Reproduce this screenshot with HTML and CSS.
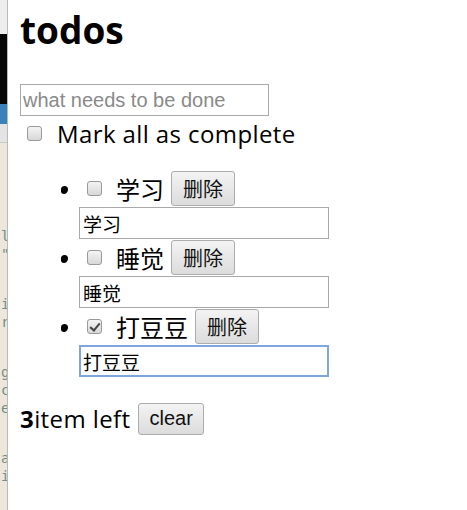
FILE: index.html
```html
<!DOCTYPE html>
<html lang="zh-CN">
<head>
  <meta charset="UTF-8">
  <title>todos</title>
  <link rel="stylesheet" href="styles.css">
</head>
<body>
  <!-- editor window behind the browser -->
  <div class="behind">
    <div class="behind-bar"></div>
    <div class="behind-dark"></div>
    <div class="behind-tab"></div>
    <div class="behind-gray"></div>
    <div class="behind-code">
      <span>l</span><span>"</span><span class="gap">i</span><span>r</span><span class="gap">g</span><span>c</span><span>e</span><span class="gap">a</span><span>i</span>
    </div>
  </div>

  <div class="app">
    <h1>todos</h1>
    <input class="new-todo" type="text" placeholder="what needs to be done">
    <label class="toggle-all">
      <input type="checkbox" class="check">
      <span>Mark all as complete</span>
    </label>

    <ul class="todo-list">
      <li>
        <div class="view">
          <input type="checkbox" class="check">
          <span class="title">学习</span>
          <button class="btn">删除</button>
        </div>
        <input class="edit" type="text" value="学习">
      </li>
      <li>
        <div class="view">
          <input type="checkbox" class="check">
          <span class="title">睡觉</span>
          <button class="btn">删除</button>
        </div>
        <input class="edit" type="text" value="睡觉">
      </li>
      <li>
        <div class="view">
          <input type="checkbox" class="check" checked>
          <span class="title">打豆豆</span>
          <button class="btn">删除</button>
        </div>
        <input class="edit focused" type="text" value="打豆豆">
      </li>
    </ul>

    <div class="footer">
      <span class="count"><strong>3</strong>item left</span>
      <button class="btn clear">clear</button>
    </div>
  </div>
</body>
</html>
```

FILE: styles.css
```css
body {
  margin: 0;
  display: flex;
  min-height: 100vh;
  background: #fff;
  color: #000;
  font-family: 'Open Sans', 'Noto Sans CJK SC', sans-serif;
}

/* Window behind */
.behind {
  width: 7px;
  border-right: 1px solid #b9b9b9;
  display: flex;
  flex-direction: column;
  overflow: hidden;
  flex-shrink: 0;
}
.behind-bar {
  height: 34px;
  background: #ededed;
}
.behind-dark {
  height: 70px;
  background: #060606;
}
.behind-tab {
  height: 20px;
  background: #3c82b8;
}
.behind-gray {
  height: 18px;
  background: #e4e4e4;
  border-bottom: 1px solid #c8c8c8;
}
.behind-code {
  flex: 1;
  background: #ece7da;
  display: flex;
  flex-direction: column;
  padding-top: 84px;
  font-family: 'DejaVu Sans Mono', monospace;
  font-size: 14px;
  line-height: 18px;
  color: #6f8f8c;
}
.behind-code span {
  margin-left: 1px;
}
.behind-code .gap {
  margin-top: 32px;
}

/* App */
.app {
  padding-left: 12px;
  flex: 1;
}
h1 {
  margin: 8px 0 0;
  font-size: 37px;
  line-height: 44px;
  font-weight: 700;
}
.new-todo {
  display: block;
  margin: 32px 0 0;
  width: 249px;
  height: 32px;
  box-sizing: border-box;
  border: 1px solid #a9a9a9;
  padding: 0 2px;
  font-family: 'Liberation Sans', sans-serif;
  font-size: 20px;
  outline: none;
}
.new-todo::placeholder {
  color: #8a8a8a;
}

.check {
  appearance: none;
  -webkit-appearance: none;
  width: 15px;
  height: 15px;
  margin: 0;
  border: 1px solid #9a9a9a;
  border-radius: 3px;
  background: linear-gradient(#f4f4f4, #d8d8d8);
  position: relative;
  flex-shrink: 0;
}
.check:checked::after {
  content: '';
  position: absolute;
  left: 4px;
  top: 1px;
  width: 4px;
  height: 8px;
  border: solid #444;
  border-width: 0 2px 2px 0;
  transform: rotate(40deg);
}

.toggle-all {
  display: flex;
  align-items: center;
  height: 34px;
  font-size: 24px;
  letter-spacing: 0.4px;
}
.toggle-all .check {
  margin: 0 15px 0 7px;
}

.todo-list {
  margin: 21px 0 0;
  padding: 0 0 0 59px;
}
.todo-list li {
  margin-bottom: 1px;
}
.view {
  display: flex;
  align-items: center;
  height: 35px;
  margin-bottom: 1px;
  position: relative;
}
.view::before {
  content: '';
  position: absolute;
  left: -18px;
  top: 15px;
  width: 7px;
  height: 7px;
  border-radius: 50%;
  background: #000;
}
.view .check {
  margin: 0 14px 0 8px;
}
.title {
  font-family: 'Noto Sans CJK SC', sans-serif;
  font-size: 24px;
  margin-right: 7px;
}
.btn {
  height: 35px;
  padding: 0 11px;
  border: 1px solid #acacac;
  border-radius: 3px;
  background: linear-gradient(#f3f3f3, #dcdcdc);
  font-family: 'Noto Sans CJK SC', sans-serif;
  font-size: 20px;
  color: #111;
}
.edit {
  display: block;
  width: 250px;
  height: 32px;
  box-sizing: border-box;
  border: 1px solid #a9a9a9;
  padding: 0 3px;
  font-family: 'Noto Sans CJK SC', sans-serif;
  font-size: 19px;
  outline: none;
}
.edit.focused {
  border: 2px solid #7ea6dc;
  padding: 0 2px;
}

.footer {
  display: flex;
  align-items: center;
  margin-top: 25px;
  font-size: 24px;
  letter-spacing: 0.4px;
}
.count {
  margin-right: 8px;
}
.clear {
  height: 32px;
  padding: 0 10px;
  font-family: 'Liberation Sans', sans-serif;
  font-size: 20px;
  letter-spacing: 0;
}
```
